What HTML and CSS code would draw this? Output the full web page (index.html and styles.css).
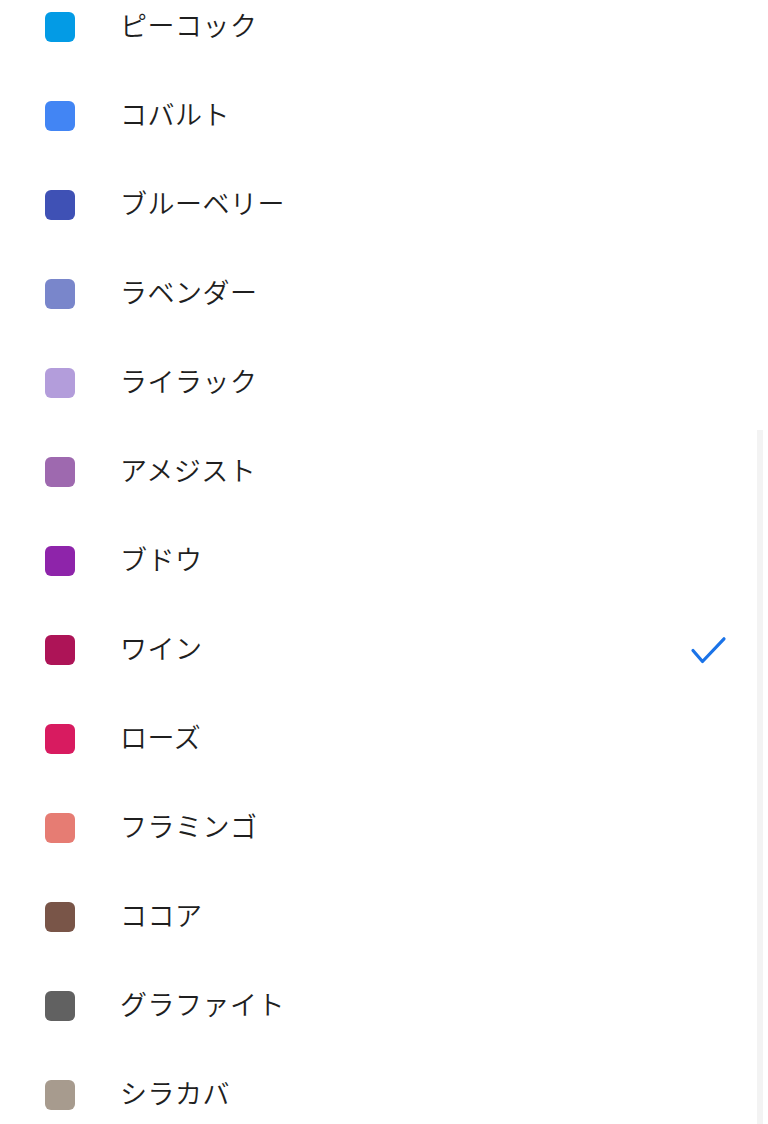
FILE: index.html
```html
<!DOCTYPE html>
<html lang="ja">
<head>
<meta charset="utf-8">
<title>色</title>
<link rel="stylesheet" href="styles.css">
</head>
<body>
<ul class="list">
  <li class="row"><span class="swatch c-peacock"></span><span class="label">ピーコック</span></li>
  <li class="row"><span class="swatch c-cobalt"></span><span class="label">コバルト</span></li>
  <li class="row"><span class="swatch c-blueberry"></span><span class="label">ブルーベリー</span></li>
  <li class="row"><span class="swatch c-lavender"></span><span class="label">ラベンダー</span></li>
  <li class="row"><span class="swatch c-lilac"></span><span class="label">ライラック</span></li>
  <li class="row"><span class="swatch c-amethyst"></span><span class="label">アメジスト</span></li>
  <li class="row"><span class="swatch c-grape"></span><span class="label">ブドウ</span></li>
  <li class="row selected"><span class="swatch c-wine"></span><span class="label">ワイン</span>
    <svg class="check" width="40" height="40" viewBox="0 0 40 40"><polyline points="5,20.5 14.5,31.5 36,8.8" fill="none" stroke="#1a73e8" stroke-width="3.2" stroke-linecap="round" stroke-linejoin="round"/></svg>
  </li>
  <li class="row"><span class="swatch c-rose"></span><span class="label">ローズ</span></li>
  <li class="row"><span class="swatch c-flamingo"></span><span class="label">フラミンゴ</span></li>
  <li class="row"><span class="swatch c-cocoa"></span><span class="label">ココア</span></li>
  <li class="row"><span class="swatch c-graphite"></span><span class="label">グラファイト</span></li>
  <li class="row"><span class="swatch c-birch"></span><span class="label">シラカバ</span></li>
</ul>
<div class="scrollbar"></div>
</body>
</html>
```

FILE: styles.css
```css
html, body {
  margin: 0;
  padding: 0;
  background: #ffffff;
  overflow: hidden;
  height: 1124px;
}
body {
  font-family: "Noto Sans CJK JP", "Noto Sans", sans-serif;
  color: #1f1f1f;
  position: relative;
}
.list {
  list-style: none;
  margin: -18px 0 0 0;
  padding: 0;
}
.row {
  height: 89px;
  display: flex;
  align-items: center;
  padding-left: 45px;
  padding-right: 40px;
}
.swatch {
  width: 30px;
  height: 30px;
  border-radius: 6px;
  flex: none;
  margin-right: 45px;
}
.label {
  flex: 1;
  font-size: 27px;
  font-weight: 350;
  letter-spacing: 0.5px;
  line-height: 1;
  padding-bottom: 4px;
}
.check {
  flex: none;
  display: block;
}
.c-peacock { background: #039be5; }
.c-cobalt { background: #4285f4; }
.c-blueberry { background: #3f51b5; }
.c-lavender { background: #7986cb; }
.c-lilac { background: #b39ddb; }
.c-amethyst { background: #9e69af; }
.c-grape { background: #8e24aa; }
.c-wine { background: #ad1457; }
.c-rose { background: #d81b60; }
.c-flamingo { background: #e67c73; }
.c-cocoa { background: #795548; }
.c-graphite { background: #616161; }
.c-birch { background: #a79b8e; }
.scrollbar {
  position: absolute;
  right: 5px;
  top: 430px;
  width: 6px;
  height: 694px;
  background: #f3f3f3;
}
```
